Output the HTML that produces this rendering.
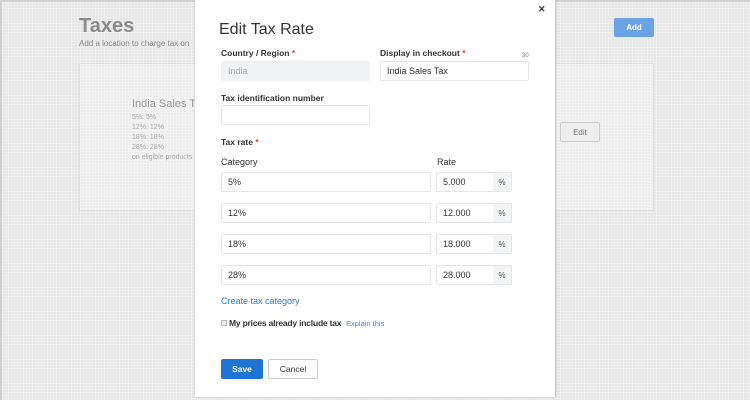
<!DOCTYPE html>
<html><head><meta charset="utf-8"><style>
*{box-sizing:border-box;margin:0;padding:0}
body{width:750px;height:400px;overflow:hidden;background:#e6e6e6;font-family:"Liberation Sans",sans-serif;position:relative;color:#222}
.a{position:absolute}
.bg{background-image:linear-gradient(rgba(255,255,255,.25) 1px,transparent 1px),linear-gradient(90deg,rgba(255,255,255,.25) 1px,transparent 1px);background-size:3px 3px}
.lbl{font-size:8.5px;font-weight:bold;color:#333}
.req{color:#e53935}
.inp{border:1px solid #e6e6e6;border-radius:2px;background:#fff;font-size:9px;padding-left:6px;display:flex;align-items:center;color:#333}
.pct{position:absolute;right:0;top:0;bottom:0;width:18px;background:#f3f4f5;font-size:8px;display:flex;align-items:center;justify-content:center;color:#555}
</style></head><body>
<div class="a bg" style="left:0;top:0;width:750px;height:400px;border-top:2px solid #d0d0d0;border-left:2px solid #d0d0d0"></div>
<div class="a" style="left:79px;top:15px;font-size:20px;color:#8a8a8a;font-weight:bold">Taxes</div>
<div class="a" style="left:79px;top:39px;font-size:8px;color:#888">Add a location to charge tax on</div>
<div class="a bg" style="left:79px;top:63px;width:575px;height:148px;background-color:#ededed;border:1px solid #e0e0e0"></div>
<div class="a" style="left:132px;top:98px;font-size:11px;color:#999">India Sales Ta</div>
<div class="a" style="left:132px;top:113px;font-size:7px;color:#aaa;line-height:10px">5%: 5%<br>12%: 12%<br>18%: 18%<br>28%: 28%<br>on eligible products</div>
<div class="a" style="left:560px;top:122px;width:40px;height:20px;border:1px solid #ccc;border-radius:2px;background:#eee;font-size:8px;color:#777;display:flex;align-items:center;justify-content:center">Edit</div>
<div class="a" style="left:614px;top:18px;width:40px;height:19px;background:#6aa3e6;border-radius:2px;font-size:8px;color:#fff;font-weight:bold;display:flex;align-items:center;justify-content:center">Add</div>

<div class="a" style="left:195px;top:0;width:361px;height:397px;background:#fff;border-right:1px solid #c8c8c8;box-shadow:0 0 2px rgba(0,0,0,.2)"></div>
<div class="a" style="left:538px;top:4px;font-size:9px;font-weight:bold;color:#333">✕</div>
<div class="a" style="left:219px;top:21px;font-size:16px;color:#333">Edit Tax Rate</div>
<div class="a lbl" style="left:221px;top:48px">Country / Region <span class="req">*</span></div>
<div class="a inp" style="left:221px;top:61px;width:149px;height:20px;background:#f1f2f3;border-color:#eee;color:#aaa">India</div>
<div class="a lbl" style="left:380px;top:48px">Display in checkout <span class="req">*</span></div>
<div class="a" style="left:522px;top:53px;font-size:6px;color:#777">30</div>
<div class="a inp" style="left:380px;top:61px;width:149px;height:20px">India Sales Tax</div>
<div class="a lbl" style="left:221px;top:93px">Tax identification number</div>
<div class="a inp" style="left:221px;top:105px;width:149px;height:20px"></div>
<div class="a lbl" style="left:221px;top:137px">Tax rate <span class="req">*</span></div>
<div class="a" style="left:221px;top:157px;font-size:9px;color:#333">Category</div>
<div class="a" style="left:437px;top:157px;font-size:9px;color:#333">Rate</div>

<div class="a inp" style="left:221px;top:172px;width:210px;height:20px">5%</div>
<div class="a inp" style="left:436px;top:172px;width:76px;height:20px">5.000<div class="pct">%</div></div>
<div class="a inp" style="left:221px;top:203px;width:210px;height:20px">12%</div>
<div class="a inp" style="left:436px;top:203px;width:76px;height:20px">12.000<div class="pct">%</div></div>
<div class="a inp" style="left:221px;top:234px;width:210px;height:20px">18%</div>
<div class="a inp" style="left:436px;top:234px;width:76px;height:20px">18.000<div class="pct">%</div></div>
<div class="a inp" style="left:221px;top:265px;width:210px;height:20px">28%</div>
<div class="a inp" style="left:436px;top:265px;width:76px;height:20px">28.000<div class="pct">%</div></div>

<div class="a" style="left:221px;top:296px;font-size:9px;color:#2f7bd6">Create tax category</div>
<div class="a" style="left:221px;top:320px;width:6px;height:6px;border:1px solid #bbb;background:#eee"></div>
<div class="a" style="left:229px;top:318px;font-size:8.5px;font-weight:bold;color:#333;letter-spacing:-0.2px;white-space:nowrap">My prices already include tax</div>
<div class="a" style="left:346px;top:319px;font-size:7.5px;color:#4a8ad8">Explain this</div>
<div class="a" style="left:221px;top:359px;width:42px;height:20px;background:#1e74d3;border-radius:2px;color:#fff;font-size:8.5px;font-weight:bold;display:flex;align-items:center;justify-content:center">Save</div>
<div class="a" style="left:268px;top:359px;width:50px;height:20px;border:1px solid #ccc;border-radius:2px;color:#333;font-size:8.5px;display:flex;align-items:center;justify-content:center">Cancel</div>
</body></html>
